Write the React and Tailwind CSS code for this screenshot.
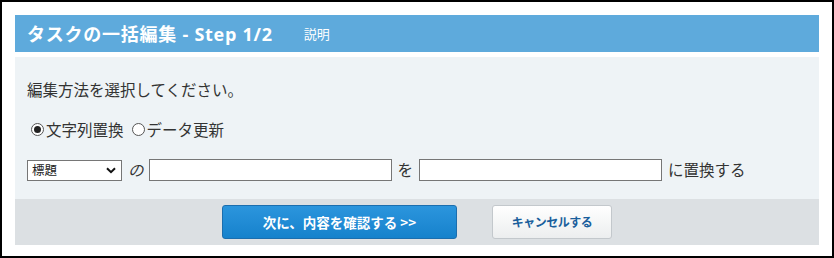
import React from 'react';

const FONT = { fontFamily: '"Noto Sans CJK JP", "Liberation Sans", sans-serif' };
const TITLE_FONT = { fontFamily: '"Open Sans", "Noto Sans CJK JP", sans-serif' };

function Radio({ checked, label }) {
  return (
    <label className="flex items-center">
      <span className="ml-[4px] flex h-[13px] w-[13px] items-center justify-center rounded-full border border-[#555] bg-white">
        {checked && <span className="h-[7px] w-[7px] rounded-full bg-[#222]" />}
      </span>
      <span className="ml-[2px] text-[15.5px] leading-[20px] text-[#333]">{label}</span>
    </label>
  );
}

export default function App() {
  return (
    <div className="h-[258px] w-[834px] border-2 border-black bg-white p-[13px]" style={FONT}>
      {/* header */}
      <div className="flex h-[37px] items-center bg-[#5eaadc] pl-3 text-white">
        <h1 className="text-[18px] font-bold leading-none tracking-[0.75px]" style={TITLE_FONT}>タスクの一括編集 - Step 1/2</h1>
        <span className="ml-[31px] text-[13px] leading-none">説明</span>
      </div>

      <div className="mt-[5px] h-[142px] bg-[#eef3f6] px-3 pt-[22px]">
        <p className="text-[15.5px] leading-[20px] text-[#333]">編集方法を選択してください。</p>

        <div className="mt-[20px] flex h-[20px] items-center gap-[4px]">
          <Radio checked label="文字列置換" />
          <Radio label="データ更新" />
        </div>

        <div className="mt-[20px] flex h-[22px] items-center text-[15.5px] text-[#333]">
          <div className="flex h-[21px] w-[95px] items-center justify-between border border-[#767676] bg-white pl-[4px] pr-[5px]">
            <span className="text-[12.5px] leading-none text-[#222]">標題</span>
            <svg width="10" height="7" viewBox="0 0 10 7">
              <path d="M1 1.2 L5 5.2 L9 1.2" fill="none" stroke="#111" strokeWidth="2" />
            </svg>
          </div>
          <span className="ml-[6px] italic">の</span>
          <input className="ml-[5px] h-[22px] w-[243px] border border-[#767676] bg-white outline-none" />
          <span className="ml-[6px]">を</span>
          <input className="ml-[6px] h-[22px] w-[243px] border border-[#767676] bg-white outline-none" />
          <span className="ml-[6px]">に置換する</span>
        </div>
      </div>

      {/* footer */}
      <div className="flex h-[46px] items-center justify-center gap-[35px] bg-[#dce0e3]">
        <button className="h-[34px] w-[235px] rounded-[3px] border border-[#1b6eae] bg-gradient-to-b from-[#2b95dd] to-[#1582cc] text-[13.5px] font-bold text-white">
          次に、内容を確認する &gt;&gt;
        </button>
        <button className="h-[34px] w-[120px] rounded-[3px] border border-[#c3c8cc] bg-gradient-to-b from-white to-[#eceeef] text-[12px] font-bold tracking-[-0.5px] text-[#1a5f9c]">
          キャンセルする
        </button>
      </div>
    </div>
  );
}
